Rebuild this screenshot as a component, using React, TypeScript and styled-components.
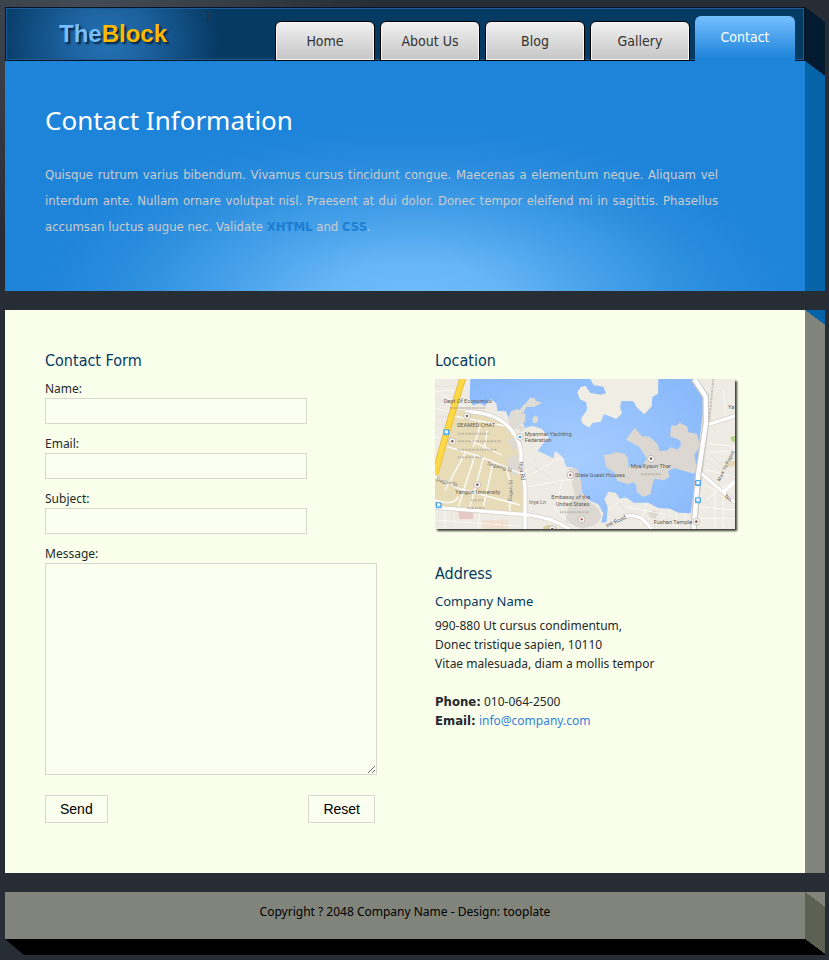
import React from "react";
import styled, { createGlobalStyle } from "styled-components";

const heading = `"DejaVu Sans Condensed", "DejaVu Sans", sans-serif`;
const text = `"Noto Sans", sans-serif`;
const dark = "#272d34";

const GlobalStyle = createGlobalStyle`
  * { box-sizing: border-box; }
  body {
    margin: 0;
    background: radial-gradient(ellipse 290px 240px at 90px 0, #454b54, ${dark}) no-repeat ${dark};
    color: #25292e;
    font: 12px/19px ${text};
  }
  h1, h2, h3, p { margin: 0; font-weight: 400; }
  a { text-decoration: none; }
`;

const Page = styled.div`
  padding: 7px 4px 5px 5px;
`;

const Block = styled.div<{ $gap?: boolean }>`
  display: grid;
  grid-template-columns: minmax(0, 1fr) 20px;
  margin-top: ${(p) => (p.$gap ? "19px" : "0")};
`;

const Side = styled.div<{ $above: string; $below: string }>`
  background: linear-gradient(to top right, ${(p) => p.$below} 50%, ${(p) => p.$above} 51%)
    0 0 / 20px 15px no-repeat ${(p) => p.$below};
`;

const Header = styled.header`
  display: flex;
  justify-content: space-between;
  height: 54px;
  padding-right: 10px;
  background: radial-gradient(ellipse 112px 100px at 102px 34px, #2473b4, #1d62a0 35%, #053a63) #053a63;
  box-shadow: inset 0 0 0 1px #061523, inset 0 0 0 2px #1d5c97;
`;

const Brand = styled.div`
  display: flex;
  align-items: flex-start;
  gap: 39px;
  padding: 12px 0 0 54px;
`;

const Logo = styled.a`
  color: #76bfff;
  font: bold 24px/29px "Liberation Sans", sans-serif;
  text-shadow: 2px 2px 2px #07233c;
  span { color: #ffba00; }
`;

const Mark = styled.span`
  color: #2b3138;
  line-height: 1;
  margin-top: -9px;
`;

const Nav = styled.nav`
  display: flex;
  align-items: flex-end;
  gap: 5px;
`;

const Tab = styled.a<{ $active?: boolean }>`
  width: 100px;
  height: ${(p) => (p.$active ? "45px" : "40px")};
  border: ${(p) => (p.$active ? "0" : "1px solid #000")};
  border-radius: 6px 6px 0 0;
  background: ${(p) =>
    p.$active ? "linear-gradient(#76bfff, #1e84da 95%)" : "linear-gradient(#f1f1f1, #c5c5c5)"};
  box-shadow: ${(p) => (p.$active ? "none" : "inset 0 0 0 1px #f6f6f6")};
  color: ${(p) => (p.$active ? "#fff" : "#333")};
  font: 14px/${(p) => (p.$active ? "42px" : "38px")} ${heading};
  text-align: center;
`;

const Hero = styled.section`
  min-height: 230px;
  padding: 40px 87px 40px 40px;
  background: radial-gradient(ellipse 48% 78% at 51% 106%, #70bdfb, #66b5f5 25%, #46a0e9 50%, #298cdd 78%, #1e84da) #1e84da;
  color: #ccc;
  font: 13px/26px ${heading};
  text-align: justify;
  a { color: #1c7ed2; font-weight: 700; }
`;

const Title = styled.h1`
  margin-bottom: 22px;
  color: #fff;
  font: 26px/39px ${text};
`;

const Content = styled.main`
  display: grid;
  grid-template-columns: minmax(0, 1fr) minmax(0, 1fr);
  gap: 60px;
  padding: 40px 40px 50px;
  background: #f9ffea;
`;

const SectionTitle = styled.h2`
  margin-bottom: 7px;
  color: #053a63;
  font: 16px/22px ${heading};
`;

const Field = styled.div<{ $wide?: boolean }>`
  margin-bottom: ${(p) => (p.$wide ? "20px" : "10px")};
  label { display: block; }
  input, textarea {
    display: block;
    box-sizing: content-box;
    margin: 0;
    padding: 0;
    border: 1px solid #d5d9ce;
    background: #fbffef;
    color: inherit;
    font: inherit;
  }
  input { width: 100%; max-width: 260px; height: 24px; }
  textarea { width: 100%; height: 210px; }
`;

const Actions = styled.div`
  display: flex;
  justify-content: space-between;
`;

const Button = styled.button`
  height: 28px;
  padding: 0 14px;
  border: 1px solid #d5d9ce;
  background: #fbffef;
  color: #000;
  font: 14px/26px "Liberation Sans", sans-serif;
`;

const MapArt = styled.svg`
  display: block;
  width: 100%;
  max-width: 300px;
  height: auto;
  margin-bottom: 34px;
  box-shadow: 2px 2px 2px #3a3c36;
  font-family: Roboto, sans-serif;
`;

const Company = styled.h3`
  margin-bottom: 5px;
  color: #053a63;
  font-size: 13px;
  line-height: 19px;
`;

const Details = styled.p`
  margin-bottom: 19px;
  strong { font: bold 13px/19px ${heading}; }
  a { color: #347fd8; }
`;

const Footer = styled.footer`
  min-height: 47px;
  padding: 10px;
  background: #81847a;
  color: #000;
  text-align: center;
  a { color: #000; }
`;

const Base = styled.div`
  height: 16px;
  background: #000;
  clip-path: polygon(0 0, 100% 0, 100% 100%, 19px 100%);
`;

const fields = ["Name", "Email", "Subject"];
const pages = ["Home", "About Us", "Blog", "Gallery", "Contact"];

function Stop({ x, y }: { x: number; y: number }) {
  return (
    <g>
      <rect x={x - 9} y={y - 9} width="18" height="18" rx="3" fill="#4ba6eb" />
      <rect x={x - 5} y={y - 6} width="10" height="9" fill="#eaf5ff" />
      <path d={`M${x - 5} ${y + 5}h3m4 0h3`} stroke="#eaf5ff" strokeWidth="2" />
    </g>
  );
}

function Place({ x, y, color = "#7b6258" }: { x: number; y: number; color?: string }) {
  return (
    <g>
      <circle cx={x} cy={y} r="10" fill="#fff" stroke="#aaa39b" strokeWidth="2" />
      <circle cx={x} cy={y} r="4" fill={color} />
    </g>
  );
}

function LocationMap() {
  return (
    <MapArt viewBox="30 117 900 450" role="img" aria-label="Map of the office location">
      <defs>
        <radialGradient id="lake" cx="45%" cy="55%" r="65%">
          <stop offset="0" stopColor="#a6cdff" />
          <stop offset="1" stopColor="#8bbafb" />
        </radialGradient>
      </defs>
      <rect x="30" y="117" width="900" height="450" fill="#eeebe4" />
      <path d="M80 210L180 212Q255 240 275 320L292 400 298 525 30 500V405Z" fill="#e7dbb8" />
      <path d="M98 512h47v26h-43zM172 541h78v26h-78z" fill="#f1dfcf" />
      <path d="M100 514h44v23h-40z" fill="#e6c9c7" />
      <path d="M355 562l14-8 26 8v5h-40z" fill="#dccf9e" />
      <path d="M916 293q8-8 14-4v18q-11-2-14-14z" fill="#b8d38c" />
      <path d="M900 367l30-5v16l-28 4z" fill="#e7d9b5" />
      <path d="M136 117H806L830 152 838 180 825 292 815 400 797 520 760 518 735 506 700 504 670 488 625 488 606 473 585 477 572 458 550 455 538 478 548 500 545 545 529 549 535 520 520 493 495 482 468 455 466 420 444 382 424 380 412 350 390 332 385 355 338 333 355 310 371 292 350 266 322 258 300 264 287 238 254 240 242 214 217 213 214 190 196 177 180 198 165 190 143 196 134 176Z" fill="url(#lake)" />
      <path d="M496 117l9 18 30 5 8 20-16 4-32-6-13-20-15 3-10 16 7 20 20 10 2 24-18 24 4 15 20 13 10-14 25-4 10-22 17 6 20 8 17-17-6-20 5-17 35 1 11 19 22 20 22-24 2-28 17-10 1-45-17-12-27 4-20-13Z" fill="#f0ede5" />
      <path d="M258 214l20-7 17 14 7-1-2 25-15 9 15 11-10 10-18-10-17 13-15-5 13-17-4-20zM304 188l11-15 15 2 2 8 20 5-25 13-22-1-10 18-14-5 17-20zM323 234l9-8 8 7-4 16-13-1z" fill="#dfdcd3" />
      <path d="M603 299l26-36 22 26 22 1 25 22 5 21 22-1 13-11 19 8 11-13-3-15-30-12 4-33 14 1 12-9 22 12 3 17 25 4 11 38-18 25 8 45-10 12-59-17-18 10 5 16-16 10-31-3-6 22-5 24-21 8-20-15-1-21-11-10-12 8-34-10-8-25-25-17-8-35 20-3 17-7 27 6 9 14 1 26 25-5 14 11 16-33-22-34Z" fill="#dcd8d1" />
      <path d="M430 383l27 3 12 40 2 38 25 22 25 20 9 25-20 25-40 10-50-20 10-45 20-35zM245 300l26-10 7 30-10 15zM245 360l20-15 20 5 2 35-15 25-25-20zM668 520l17-9 17 7-9 17-16-2z" fill="#ddd9d2" />
      <g fill="none" stroke="#fff" strokeWidth="4">
        <path d="M78 226L250 260M66 320l100 30 120 50 20-10M120 340L60 450M150 345L100 500M175 355L135 500M205 366L175 500M245 385l8 35 2 92M30 410l70 35 185 50M30 480q55 20 70-10M135 300l95 45M165 260l-20 60M187 270l-10 60" />
        <path d="M45 160l70 40M30 205l45 10M30 155l65-5M30 290l15 5M310 410l90-55 20 5M310 440l110-20 25-1M30 540l270 20M60 510v57M165 510l-5 57M410 430l-20 75 60 62M600 470l-50 40M600 500l130 25M665 490l-20 70M755 520v47M780 520v47M850 310l80 10M850 340l80-10M840 390l90 20M835 435l80 30M845 480l50-40M820 500l110 10M815 535h115M870 430v137M895 440v127M895 150l10 90" strokeWidth="2" />
      </g>
      <g fill="none" stroke="#ddd8ce" strokeWidth="1">
        <path d="M30 140h60M30 178l60 10M30 230h40M30 255h38M310 370l95 60M330 360l15 45M550 515l60 50M580 493l80 55M690 510v57M725 520v47M840 360l90 60M850 340l80 70M830 470l70 80M40 515v50M80 515l-3 50M200 525v42M230 527v40" />
      </g>
      <g fill="none" stroke="#d6d1ca" strokeWidth="14">
        <path d="M120 214Q215 217 255 265T287 360L300 440V567" />
        <path d="M30 502L300 524Q375 530 433 567M570 545Q610 515 650 535L680 567M842 270L826 400 806 567M845 255l85-27M828 400L930 487" />
      </g>
      <g fill="none" stroke="#fff" strokeWidth="10">
        <path d="M120 214Q215 217 255 265T287 360L300 440V567" />
        <path d="M30 502L300 524Q375 530 433 567M570 545Q610 515 650 535L680 567M845 255l85-27M828 400L930 487M895 455l35-30" />
      </g>
      <path d="M806 117L842 170 843 250 820 400 806 567" fill="none" stroke="#cec7c2" strokeWidth="20" />
      <path d="M808 117L842 170 843 250 820 400 806 567" fill="none" stroke="#fff" strokeWidth="13" />
      <path d="M115 110Q80 220 30 402" fill="none" stroke="#e8b93d" strokeWidth="20" />
      <path d="M115 110Q80 220 30 402" fill="none" stroke="#ffd944" strokeWidth="15" />
      <Stop x={64} y={277} />
      <Stop x={41} y={496} />
      <Stop x={819} y={429} />
      <Stop x={819} y={481} />
      <Place x={126} y={228} />
      <Place x={82} y={304} />
      <Place x={285} y={291} color="#3d9be9" />
      <Place x={157} y={434} />
      <Place x={436} y={405} color="#c26b5e" />
      <Place x={470} y={538} color="#c26b5e" />
      <Place x={678} y={356} />
      <Place x={814} y={545} color="#8b5a4b" />
      <Place x={382} y={567} />
      <g fill="#5f5b57" fontSize="17">
        <text x="56" y="189">Dept Of Economics</text>
        <text x="96" y="262">SEAMED CHAT</text>
        <text x="299" y="289">Myanmar Yachting</text>
        <text x="299" y="307">Federation</text>
        <text x="91" y="462">Yangon University</text>
        <text x="450" y="411">State Guest Houses</text>
        <text x="379" y="478">Embassy of the</text>
        <text x="392" y="498">United States</text>
        <text x="617" y="385">Mya Kyaun Thar</text>
        <text x="686" y="551">Fushan Temple</text>
        <text x="909" y="207">Ya</text>
        <text transform="translate(283 366) rotate(84)">Inya Rd</text>
        <text transform="translate(545 563) rotate(-25)">ine Road</text>
        <text transform="translate(898 471) rotate(38)">No.</text>
      </g>
      <g fill="#77716a" fontSize="16">
        <text x="312" y="492">Inya Ln</text>
        <text transform="translate(186 374) rotate(17)">Sagaing St</text>
        <text transform="translate(33 422) rotate(17)">Dagon St</text>
        <text transform="translate(260 484) rotate(-88)">Bagan St</text>
        <text transform="translate(885 425) rotate(-64)" fontSize="15">Maw Ya Pagod</text>
      </g>
      <g stroke="#938d86" strokeWidth="6" strokeDasharray="5 2 3 2 7 3" opacity=".45">
        <path d="M75 204h105M98 281h96M98 304h130M98 329h118M98 352h78M137 481h38M128 504h52M405 517h86M648 403h60M865 117l-12 125" fill="none" />
      </g>
    </MapArt>
  );
}

export default function App() {
  return (
    <>
      <GlobalStyle />
      <Page>
        <Block>
          <Header>
            <Brand>
              <Logo href="#">The<span>Block</span></Logo>
              <Mark>)</Mark>
            </Brand>
            <Nav>
              {pages.map((name) => (
                <Tab key={name} href="#" $active={name === "Contact"}>{name}</Tab>
              ))}
            </Nav>
          </Header>
          <Side $above={dark} $below="#021b30" />
        </Block>
        <Block>
          <Hero>
            <Title>Contact Information</Title>
            <p>
              Quisque rutrum varius bibendum. Vivamus cursus tincidunt congue. Maecenas a elementum
              neque. Aliquam vel interdum ante. Nullam ornare volutpat nisl. Praesent at dui dolor.
              Donec tempor eleifend mi in sagittis. Phasellus accumsan luctus augue nec. Validate{" "}
              <a href="#">XHTML</a> and <a href="#">CSS</a>.
            </p>
          </Hero>
          <Side $above="#021b30" $below="#0563a8" />
        </Block>
        <Block $gap>
          <Content>
            <form>
              <SectionTitle>Contact Form</SectionTitle>
              {fields.map((name) => (
                <Field key={name}>
                  <label htmlFor={name}>{name}:</label>
                  <input id={name} type={name === "Email" ? "email" : "text"} />
                </Field>
              ))}
              <Field $wide>
                <label htmlFor="message">Message:</label>
                <textarea id="message" />
              </Field>
              <Actions>
                <Button type="submit">Send</Button>
                <Button type="reset">Reset</Button>
              </Actions>
            </form>
            <section>
              <SectionTitle>Location</SectionTitle>
              <LocationMap />
              <SectionTitle>Address</SectionTitle>
              <Company>Company Name</Company>
              <Details>
                990-880 Ut cursus condimentum,<br />
                Donec tristique sapien, 10110<br />
                Vitae malesuada, diam a mollis tempor
              </Details>
              <Details>
                <strong>Phone:</strong> 010-064-2500<br />
                <strong>Email:</strong> <a href="mailto:info@company.com">info@company.com</a>
              </Details>
            </section>
          </Content>
          <Side $above="#0563a8" $below="#81847a" />
        </Block>
        <Block $gap>
          <Footer>
            Copyright ? 2048 Company Name - Design: <a href="#">tooplate</a>
          </Footer>
          <Side $above="#81847a" $below="#5d6152" />
        </Block>
        <Block>
          <Base />
          <Side $above="#5d6152" $below="#000" />
        </Block>
      </Page>
    </>
  );
}
